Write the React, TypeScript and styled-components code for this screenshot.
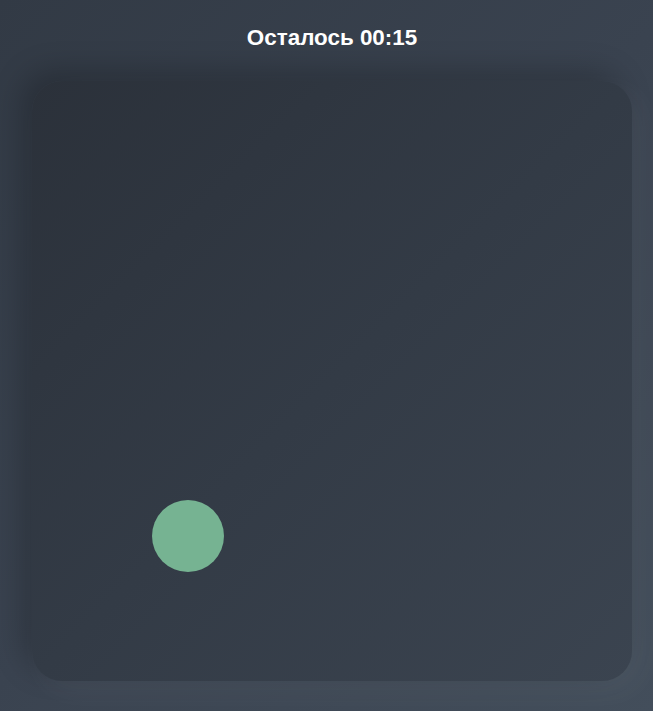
import React from "react";
import styled, { createGlobalStyle } from "styled-components";

const Global = createGlobalStyle`
  html, body { margin: 0; padding: 0; }
  body {
    min-height: 711px;
    background: linear-gradient(135deg, #323a45 0%, #3a4350 50%, #434e5b 100%);
    font-family: "Liberation Sans", Arial, sans-serif;
  }
`;

const Page = styled.div`
  width: 653px;
  height: 711px;
  display: flex;
  flex-direction: column;
  align-items: center;
  box-sizing: border-box;
  padding-top: 25px;
  padding-left: 11px;
  overflow: hidden;
`;

const Timer = styled.h2`
  margin: 0;
  color: #ffffff;
  font-size: 22.4px;
  font-weight: 700;
  line-height: 26px;
`;

const Field = styled.div`
  position: relative;
  flex: none;
  margin-top: 30px;
  width: 600px;
  height: 600px;
  border-radius: 30px;
  background: linear-gradient(135deg, #2b313a 0%, #333b46 50%, #3b4450 100%);
  box-shadow: -10px -10px 30px rgba(0, 0, 0, 0.22),
    10px 10px 30px rgba(255, 255, 255, 0.05);
`;

const Dot = styled.div<{ $x: number; $y: number; $size: number }>`
  position: absolute;
  left: ${(p) => p.$x}px;
  top: ${(p) => p.$y}px;
  width: ${(p) => p.$size}px;
  height: ${(p) => p.$size}px;
  border-radius: 50%;
  background: #76b392;
`;

export default function App() {
  return (
    <>
      <Global />
      <Page>
        <Timer>Осталось 00:15</Timer>
        <Field>
          <Dot $x={120} $y={419} $size={72} />
        </Field>
      </Page>
    </>
  );
}
